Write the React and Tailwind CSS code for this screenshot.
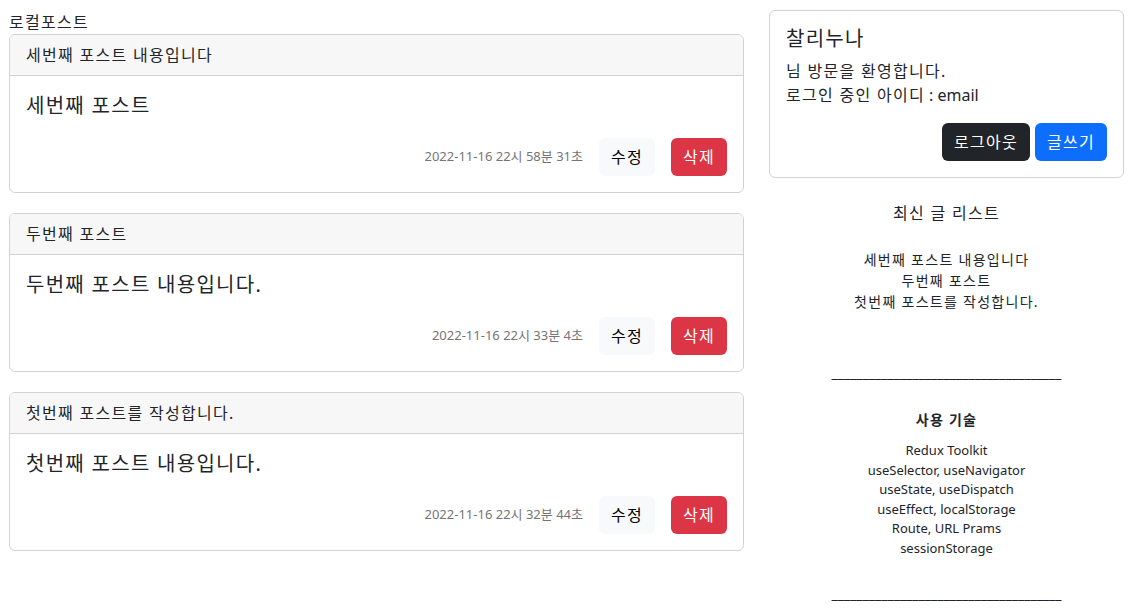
const posts = [
  {
    title: "세번째 포스트 내용입니다",
    content: "세번째 포스트",
    date: "2022-11-16 22시 58분 31초",
  },
  {
    title: "두번째 포스트",
    content: "두번째 포스트 내용입니다.",
    date: "2022-11-16 22시 33분 4초",
  },
  {
    title: "첫번째 포스트를 작성합니다.",
    content: "첫번째 포스트 내용입니다.",
    date: "2022-11-16 22시 32분 44초",
  },
];

const techs = [
  "Redux Toolkit",
  "useSelector, useNavigator",
  "useState, useDispatch",
  "useEffect, localStorage",
  "Route, URL Prams",
  "sessionStorage",
];

const font = {
  fontFamily: '"Noto Sans", "Noto Sans CJK KR", sans-serif',
};

const line = "_____________________________________";

function PostCard({ post }) {
  return (
    <div className="border border-[#d2d2d2] rounded-md bg-white overflow-hidden">
      <div className="bg-[#f7f7f7] border-b border-[#d2d2d2] px-4 py-2 text-base leading-6">
        {post.title}
      </div>
      <div className="p-4">
        <h5 className="text-xl leading-6 mt-[2px] mb-[20px]">{post.content}</h5>
        <div className="flex items-center justify-end">
          <span className="text-[13px] text-[#757575] mr-4 tracking-normal">
            {post.date}
          </span>
          <button className="h-[38px] px-3 rounded-md bg-[#f8f9fa] text-black text-base leading-6">
            수정
          </button>
          <button className="h-[38px] px-3 ml-4 rounded-md bg-[#dc3545] text-white text-base leading-6">
            삭제
          </button>
        </div>
      </div>
    </div>
  );
}

export default function App() {
  return (
    <div className="bg-white text-[#212529] min-h-[609px] tracking-[0.08em]" style={font}>
      <div className="flex gap-[25px] pl-[9px] pt-[10px]">
        {/* 왼쪽: 포스트 목록 */}
        <div className="w-[735px]">
          <div className="text-base leading-6">로컬포스트</div>
          <div className="flex flex-col gap-[20px]">
            {posts.map((p) => (
              <PostCard key={p.date} post={p} />
            ))}
          </div>
        </div>

        {/* 오른쪽: 사이드바 */}
        <div className="w-[355px]">
          <div className="border border-[#d2d2d2] rounded-md p-4">
            <h5 className="text-xl leading-6 mb-2">찰리누나</h5>
            <p className="text-base leading-6">님 방문을 환영합니다.</p>
            <p className="text-base leading-6 mb-4">
              로그인 중인 아이디<span className="tracking-normal"> : email</span>
            </p>
            <div className="flex justify-end gap-[5px]">
              <button className="h-[38px] px-3 rounded-md bg-[#212529] text-white text-base leading-6">
                로그아웃
              </button>
              <button className="h-[38px] px-3 rounded-md bg-[#0d6efd] text-white text-base leading-6">
                글쓰기
              </button>
            </div>
          </div>

          <div className="text-center">
            <div className="text-base leading-6 mt-[23px]">최신 글 리스트</div>
            <div className="mt-6 text-sm leading-[21px]">
              {posts.map((p) => (
                <div key={p.date}>{p.title}</div>
              ))}
            </div>
            <div className="mt-[50px] text-sm leading-[21px] tracking-normal">{line}</div>
            <div className="mt-[26px] text-sm font-bold leading-[21px]">사용 기술</div>
            <div className="mt-[11px] text-[13px] leading-[19.6px] tracking-normal">
              {techs.map((t) => (
                <div key={t}>{t}</div>
              ))}
            </div>
            <div className="mt-[24px] text-sm leading-[21px] tracking-normal">{line}</div>
          </div>
        </div>
      </div>
    </div>
  );
}
